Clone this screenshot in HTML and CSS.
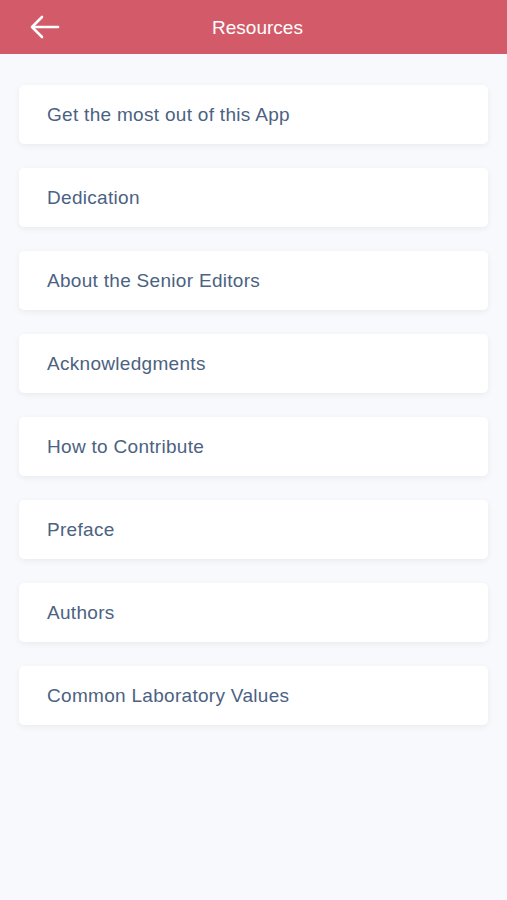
FILE: index.html
```html
<!DOCTYPE html>
<html lang="en">
<head>
    <meta charset="UTF-8">
    <meta name="viewport" content="width=device-width, initial-scale=1.0">
    <title>Resources</title>
    <link rel="stylesheet" href="styles.css">
</head>
<body>
    <div class="header">
        <button class="back-button" aria-label="Back">
            <svg width="30" height="24" viewBox="0 0 30 24" fill="none" stroke="#fff" stroke-width="2.6" stroke-linecap="round" stroke-linejoin="round">
                <path d="M28 12H3"/>
                <path d="M12 2L2 12l10 10"/>
            </svg>
        </button>
        <h1>Resources</h1>
    </div>

    <div class="resource-list">
        <div class="resource-item">Get the most out of this App</div>
        <div class="resource-item">Dedication</div>
        <div class="resource-item">About the Senior Editors</div>
        <div class="resource-item">Acknowledgments</div>
        <div class="resource-item">How to Contribute</div>
        <div class="resource-item">Preface</div>
        <div class="resource-item">Authors</div>
        <div class="resource-item">Common Laboratory Values</div>
    </div>
</body>
</html>
```

FILE: styles.css
```css
* {
    box-sizing: border-box;
    margin: 0;
    padding: 0;
}

body {
    font-family: 'Liberation Sans', Arial, sans-serif;
    background-color: #f7f9fc;
    min-height: 100vh;
}

.header {
    height: 54px;
    background-color: #d35b69;
    display: flex;
    align-items: center;
    justify-content: center;
    position: relative;
    padding-top: 2px;
}

.header h1 {
    color: white;
    font-size: 19px;
    font-weight: normal;
    margin-left: 8px;
}

.back-button {
    position: absolute;
    left: 30px;
    top: 15px;
    background: none;
    border: none;
    cursor: pointer;
    display: flex;
}

.resource-list {
    display: flex;
    flex-direction: column;
    gap: 24px;
    padding: 31px 19px 0 19px;
}

.resource-item {
    height: 59px;
    background-color: white;
    border-radius: 5px;
    box-shadow: 0 2px 6px rgba(0,0,0,0.06);
    display: flex;
    align-items: center;
    padding-left: 28px;
    padding-top: 1px;
    font-size: 19px;
    letter-spacing: 0.3px;
    color: #4b6282;
    cursor: pointer;
}
```
